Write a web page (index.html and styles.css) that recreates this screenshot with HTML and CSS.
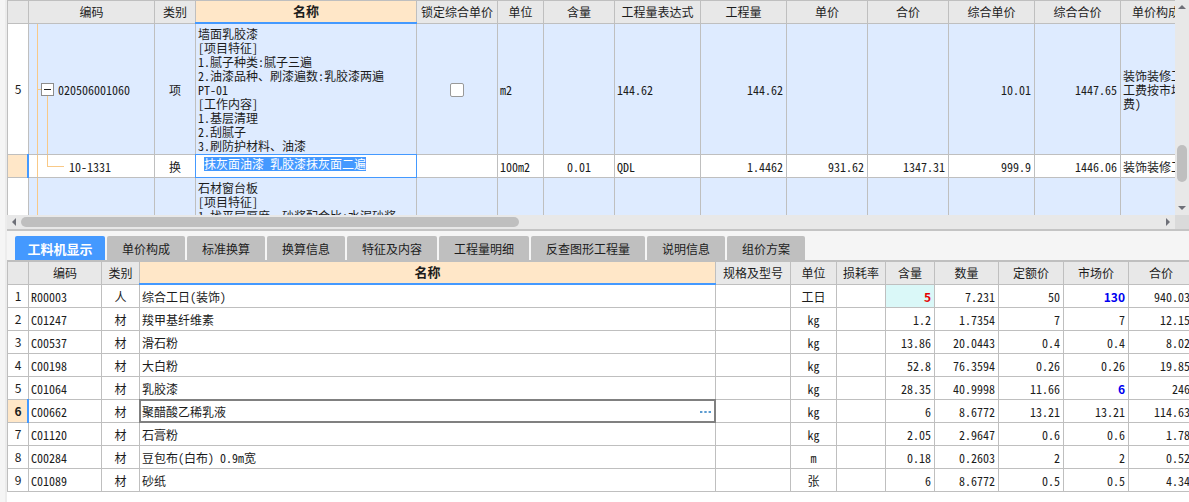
FILE: index.html
```html
<!DOCTYPE html>
<html lang="zh-CN">
<head>
<meta charset="utf-8">
<title>工料机显示</title>
<link rel="stylesheet" href="styles.css">
</head>
<body>
<div class="app">
  <aside class="gutter"></aside>
  <main class="main">
    <section class="list">
      <div class="list-view">
        <table class="grid items">
          <colgroup>
            <col class="w21"><col class="w126"><col class="w41"><col><col class="w81"><col class="w46"><col class="w71"><col class="w86"><col class="w86"><col class="w81"><col class="w81"><col class="w86"><col class="w86"><col class="w95">
          </colgroup>
          <thead>
            <tr><th></th><th>编码</th><th>类别</th><th class="current">名称</th><th>锁定综合单价</th><th>单位</th><th>含量</th><th>工程量表达式</th><th>工程量</th><th>单价</th><th>合价</th><th>综合单价</th><th>综合合价</th><th>单价构成文件</th></tr>
          </thead>
          <tbody>
            <tr class="parent">
              <td class="no">5</td>
              <td class="tree root"><div class="node"><button class="toggle" aria-label="折叠"><svg viewBox="0 0 11 11" width="11" height="11"><path d="M2 5.5h7" stroke="#222" fill="none"/></svg></button><span>020506001060</span></div></td>
              <td class="mid">项</td>
              <td>墙面乳胶漆<br>[项目特征]<br>1.腻子种类:腻子三遍<br>2.油漆品种、刷漆遍数:乳胶漆两遍<br>PT-01<br>[工作内容]<br>1.基层清理<br>2.刮腻子<br>3.刷防护材料、油漆</td>
              <td class="mid"><input type="checkbox" class="check" aria-label="锁定综合单价"></td>
              <td>m2</td><td></td><td>144.62</td><td class="num">144.62</td><td></td><td></td><td class="num">10.01</td><td class="num">1447.65</td>
              <td>装饰装修工程<br>工费按市场<br>费)</td>
            </tr>
            <tr>
              <td class="no picked"></td>
              <td class="tree leaf">10-1331</td>
              <td class="mid">换</td>
              <td class="editing"><input class="editor" type="text" aria-label="名称" value="抹灰面油漆 乳胶漆抹灰面二遍"></td>
              <td></td><td>100m2</td><td class="mid">0.01</td><td>QDL</td><td class="num">1.4462</td><td class="num">931.62</td><td class="num">1347.31</td><td class="num">999.9</td><td class="num">1446.06</td><td>装饰装修工程</td>
            </tr>
            <tr class="parent">
              <td class="no"></td><td class="tree"></td><td></td>
              <td class="top">石材窗台板<br>[项目特征]<br>1.找平层厚度、砂浆配合比:水泥砂浆</td>
              <td></td><td></td><td></td><td></td><td></td><td></td><td></td><td></td><td></td><td></td>
            </tr>
          </tbody>
        </table>
      </div>
      <div class="vbar">
        <button class="arrow" aria-label="向上"><svg viewBox="0 0 14 14" width="14" height="14"><path d="M3 9L7 5L11 9z" fill="#6e7078"/></svg></button>
        <div class="vtrack"><span class="before"></span><span class="thumb"></span><span class="after"></span></div>
        <button class="arrow" aria-label="向下"><svg viewBox="0 0 14 14" width="14" height="14"><path d="M3 5L7 9L11 5z" fill="#6e7078"/></svg></button>
      </div>
      <div class="hbar">
        <button class="arrow" aria-label="向左"><svg viewBox="0 0 14 14" width="14" height="14"><path d="M9 3L5 7L9 11z" fill="#6e7078"/></svg></button>
        <div class="htrack"><div class="thumb"></div></div>
        <button class="arrow" aria-label="向右"><svg viewBox="0 0 14 14" width="14" height="14"><path d="M5 3L9 7L5 11z" fill="#6e7078"/></svg></button>
      </div>
      <div class="corner"></div>
    </section>

    <nav class="tabs">
      <button class="tab active">工料机显示</button><button class="tab">单价构成</button><button class="tab">标准换算</button><button class="tab">换算信息</button><button class="tab">特征及内容</button><button class="tab">工程量明细</button><button class="tab">反查图形工程量</button><button class="tab">说明信息</button><button class="tab">组价方案</button>
    </nav>

    <section class="detail">
      <table class="grid parts">
        <colgroup>
          <col class="w21"><col class="w73"><col class="w38"><col><col class="w75"><col class="w46"><col class="w49"><col class="w49"><col class="w64"><col class="w65"><col class="w65"><col class="w65">
        </colgroup>
        <thead>
          <tr><th></th><th>编码</th><th>类别</th><th class="current">名称</th><th>规格及型号</th><th>单位</th><th>损耗率</th><th>含量</th><th>数量</th><th>定额价</th><th>市场价</th><th>合价</th></tr>
        </thead>
        <tbody>
          <tr><td class="no">1</td><td>R00003</td><td class="mid">人</td><td>综合工日(装饰)</td><td></td><td class="mid">工日</td><td></td><td class="num changed">5</td><td class="num">7.231</td><td class="num">50</td><td class="num custom">130</td><td class="num">940.03</td></tr>
          <tr><td class="no">2</td><td>C01247</td><td class="mid">材</td><td>羧甲基纤维素</td><td></td><td class="mid">kg</td><td></td><td class="num">1.2</td><td class="num">1.7354</td><td class="num">7</td><td class="num">7</td><td class="num">12.15</td></tr>
          <tr><td class="no">3</td><td>C00537</td><td class="mid">材</td><td>滑石粉</td><td></td><td class="mid">kg</td><td></td><td class="num">13.86</td><td class="num">20.0443</td><td class="num">0.4</td><td class="num">0.4</td><td class="num">8.02</td></tr>
          <tr><td class="no">4</td><td>C00198</td><td class="mid">材</td><td>大白粉</td><td></td><td class="mid">kg</td><td></td><td class="num">52.8</td><td class="num">76.3594</td><td class="num">0.26</td><td class="num">0.26</td><td class="num">19.85</td></tr>
          <tr><td class="no">5</td><td>C01064</td><td class="mid">材</td><td>乳胶漆</td><td></td><td class="mid">kg</td><td></td><td class="num">28.35</td><td class="num">40.9998</td><td class="num">11.66</td><td class="num custom">6</td><td class="num">246</td></tr>
          <tr><td class="no picked">6</td><td>C00662</td><td class="mid">材</td><td class="focused"><div class="lookup"><span>聚醋酸乙稀乳液</span><button class="more" aria-label="选择"><svg viewBox="0 0 11 2" width="11" height="2"><path d="M0 1h2.4M4.3 1h2.4M8.6 1H11" stroke="#5b9bd0" stroke-width="2"/></svg></button></div></td><td></td><td class="mid">kg</td><td></td><td class="num">6</td><td class="num">8.6772</td><td class="num">13.21</td><td class="num">13.21</td><td class="num">114.63</td></tr>
          <tr><td class="no">7</td><td>C01120</td><td class="mid">材</td><td>石膏粉</td><td></td><td class="mid">kg</td><td></td><td class="num">2.05</td><td class="num">2.9647</td><td class="num">0.6</td><td class="num">0.6</td><td class="num">1.78</td></tr>
          <tr><td class="no">8</td><td>C00284</td><td class="mid">材</td><td>豆包布(白布) 0.9m宽</td><td></td><td class="mid">m</td><td></td><td class="num">0.18</td><td class="num">0.2603</td><td class="num">2</td><td class="num">2</td><td class="num">0.52</td></tr>
          <tr><td class="no">9</td><td>C01089</td><td class="mid">材</td><td>砂纸</td><td></td><td class="mid">张</td><td></td><td class="num">6</td><td class="num">8.6772</td><td class="num">0.5</td><td class="num">0.5</td><td class="num">4.34</td></tr>
        </tbody>
      </table>
    </section>
  </main>
</div>
</body>
</html>
```

FILE: styles.css
```css
:root {
  --line: #bfbfbf;
  --head: #e8e8e8;
  --peach: #ffe7c8;
  --blue: #4499ff;
  --tree: #f9c987;
}
* { box-sizing: border-box; }
body {
  margin: 0;
  background: #fff;
  color: #1c1c1c;
  font: 12px/14px "Noto Sans CJK SC", "Liberation Sans", sans-serif;
  font-feature-settings: "hwid";
}
button, input {
  margin: 0;
  padding: 0;
  border: 0;
  font: inherit;
  font-feature-settings: inherit;
  color: inherit;
}
svg { display: block; }

.app { display: flex; min-height: 100vh; overflow: hidden; }
.gutter { flex: 0 0 7px; background: #f5f5f5; border-right: 2px solid #ececec; }
.main { flex: 1; min-width: 0; }

/* Item list and its scroll bars */
.list {
  display: grid;
  grid-template-columns: 1fr 14px;
  grid-template-rows: 215px 14px;
  border-bottom: 2px solid #c4c4c4;
}
.list-view { overflow: hidden; min-width: 0; border-top: 1px solid var(--line); border-left: 1px solid var(--line); }
.vbar { display: flex; flex-direction: column; background: var(--head); }
.hbar { display: flex; background: var(--head); }
.corner { background: #dadada; }
.arrow { background: none; width: 14px; height: 14px; flex: none; }
.vtrack { flex: 1; display: flex; flex-direction: column; padding: 0 2px; }
.vtrack .before { flex: 131; }
.vtrack .thumb { flex: 37; }
.vtrack .after { flex: 19; }
.htrack { flex: 1; padding: 2px 0; }
.htrack .thumb { width: 43.7%; height: 10px; }
.thumb { background: var(--line); border-radius: 5px; }

/* Grids */
.grid { table-layout: fixed; border-collapse: separate; border-spacing: 0; }
.items { width: calc(100% + 41px); }
.parts { width: calc(100% + 5px); }
.grid th, .grid td {
  position: relative;
  height: 23px;
  padding: 1px 3px 0 2px;
  border-right: 1px solid var(--line);
  border-bottom: 1px solid var(--line);
  white-space: nowrap;
  text-align: left;
}
.grid th { background: var(--head); padding: 0; font-weight: 400; text-align: center; }
.grid th.current { background: var(--peach); font-size: 13px; font-weight: 700; padding-bottom: 2px; }
.grid th.current::after {
  content: "";
  position: absolute;
  inset: auto -1px -1px -1px;
  height: 2px;
  background: var(--blue);
}
.grid td.mid { text-align: center; padding: 1px 0 0; }
.grid td.num { text-align: right; }
.grid td.no { background: #fff; text-align: center; padding: 0; font-feature-settings: normal; }
.grid td.picked { background: var(--peach); font-weight: 700; }
.grid td.picked::after {
  content: "";
  position: absolute;
  inset: -1px -1px -1px auto;
  width: 2px;
  background: var(--blue);
}
.parent td { background-color: #deebff; }
.items .parent td { height: 131px; }
.items td.top { vertical-align: top; padding-top: 3px; }

.grid td.tree {
  padding-left: 0;
  background-image: linear-gradient(var(--tree), var(--tree)), linear-gradient(var(--tree), var(--tree)), linear-gradient(var(--tree), var(--tree));
  background-repeat: no-repeat;
  background-position: 8px 0;
  background-size: 1px 100%;
}
.grid td.root { background-position: 8px 0, 8px 50%, 18px 100%; background-size: 1px 100%, 6px 1px, 1px 50%; }
.grid td.leaf { padding-left: 40px; background-position: 8px 0, 18px 50%, 18px 0; background-size: 1px 100%, 17px 1px, 1px 50%; }
.node { display: flex; align-items: center; gap: 4px; padding-left: 12px; }
.toggle { width: 13px; height: 13px; background: #fff; border: 1px solid #8c8c8c; }
.check {
  appearance: none;
  display: block;
  width: 14px;
  height: 14px;
  margin: 0 auto;
  background: #fff;
  border: 1px solid #999;
  border-radius: 2px;
}
.editing::after, .focused::after {
  content: "";
  position: absolute;
  inset: -1px;
  border: 1px solid var(--blue);
  pointer-events: none;
}
.focused::after { border: 2px solid #808080; }
.grid td.editing { vertical-align: top; padding: 2px 8px 0; }
.editor { display: block; field-sizing: content; height: 14px; background: var(--blue); color: #fff; }
.lookup { display: flex; align-items: center; justify-content: space-between; }
.more { background: none; padding: 4px 1px; }

.grid td.changed { background: #daf8f8; color: #e60000; font-weight: 700; font-feature-settings: normal; }
.grid td.custom { color: #0000f0; font-weight: 700; font-feature-settings: normal; }

/* Tabs */
.tabs { display: flex; gap: 2px; padding: 5px 8px 0; background: #f5f5f5; border-bottom: 2px solid var(--line); }
.tab { height: 24px; padding: 2px 15px 0; background: var(--line); border-radius: 2px 2px 0 0; white-space: nowrap; }
.tab.active { min-width: 90px; padding: 2px 12px 0; background: var(--blue); color: #fff; font-size: 13px; font-weight: 700; }
.detail { overflow: hidden; border-left: 1px solid var(--line); }

.w21 { width: 21px; }
.w38 { width: 38px; }
.w41 { width: 41px; }
.w46 { width: 46px; }
.w49 { width: 49px; }
.w64 { width: 64px; }
.w65 { width: 65px; }
.w71 { width: 71px; }
.w73 { width: 73px; }
.w75 { width: 75px; }
.w81 { width: 81px; }
.w86 { width: 86px; }
.w95 { width: 95px; }
.w126 { width: 126px; }
```
